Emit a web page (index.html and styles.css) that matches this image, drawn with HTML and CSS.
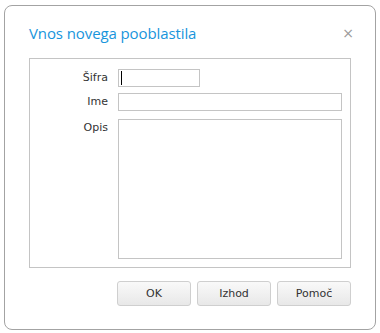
FILE: index.html
```html
<!DOCTYPE html>
<html lang="sl">
<head>
  <meta charset="UTF-8" />
  <title>Vnos novega pooblastila</title>
  <link rel="stylesheet" href="styles.css">
</head>
<body>
  <div class="dialog">
    <div class="dialog-head">
      <h1 class="dialog-title">Vnos novega pooblastila</h1>
      <span class="dialog-close">&#215;</span>
    </div>

    <div class="panel">
      <label class="field-label" for="sifra">Šifra</label>
      <div class="field"><input id="sifra" class="input input-short" type="text"><span class="caret"></span></div>

      <label class="field-label" for="ime">Ime</label>
      <div class="field"><input id="ime" class="input" type="text"></div>

      <label class="field-label field-gap" for="opis">Opis</label>
      <div class="field field-gap"><textarea id="opis" class="input textarea"></textarea></div>
    </div>

    <div class="actions">
      <button class="btn">OK</button>
      <button class="btn">Izhod</button>
      <button class="btn">Pomoč</button>
    </div>
  </div>
</body>
</html>
```

FILE: styles.css
```css
body {
  margin: 0;
  background: #fff;
  font-family: "DejaVu Sans", Tahoma, sans-serif;
  font-size: 11px;
  color: #333;
}

.dialog {
  box-sizing: border-box;
  margin: 5px 0 0 4px;
  width: 372px;
  height: 325px;
  border: 1px solid #a3a3a3;
  border-radius: 8px;
  padding: 0 24px;
}

.dialog-head {
  display: flex;
  justify-content: space-between;
  align-items: center;
  height: 52px;
}

.dialog-title {
  margin: 0;
  font-family: "Open Sans", sans-serif;
  font-weight: 400;
  font-size: 15px;
  letter-spacing: -0.1px;
  color: #1895dc;
  padding-top: 1px;
}

.dialog-close {
  font-family: "DejaVu Sans", sans-serif;
  font-size: 14px;
  color: #9a9a9a;
  margin-right: -3px;
  padding-top: 2px;
}

.panel {
  box-sizing: border-box;
  height: 210px;
  border: 1px solid #c4c4c4;
  padding: 10px 8px 8px 0;
  display: grid;
  grid-template-columns: 78px 1fr;
  grid-template-rows: 18px 18px 1fr;
  column-gap: 10px;
  row-gap: 6px;
}

.field-label {
  text-align: right;
  line-height: 18px;
  color: #333;
}

.field {
  position: relative;
}

.field-gap {
  margin-top: 2px;
}

.input {
  box-sizing: border-box;
  display: block;
  width: 100%;
  height: 18px;
  margin: 0;
  border: 1px solid #c4c4c4;
  background: #fff;
  padding: 0 2px;
  font: inherit;
  outline: none;
}

.input-short {
  width: 82px;
}

.textarea {
  height: 100%;
  resize: none;
}

.caret {
  position: absolute;
  left: 3px;
  top: 2px;
  width: 1px;
  height: 14px;
  background: #000;
}

.actions {
  display: flex;
  justify-content: flex-end;
  gap: 6px;
  margin-top: 13px;
}

.btn {
  box-sizing: border-box;
  width: 74px;
  height: 25px;
  border: 1px solid #cfcfcf;
  border-radius: 3px;
  background: linear-gradient(#f9f9f9, #e8e8e8);
  font-family: "DejaVu Sans", Tahoma, sans-serif;
  font-size: 11px;
  color: #333;
  padding: 0;
}
```
